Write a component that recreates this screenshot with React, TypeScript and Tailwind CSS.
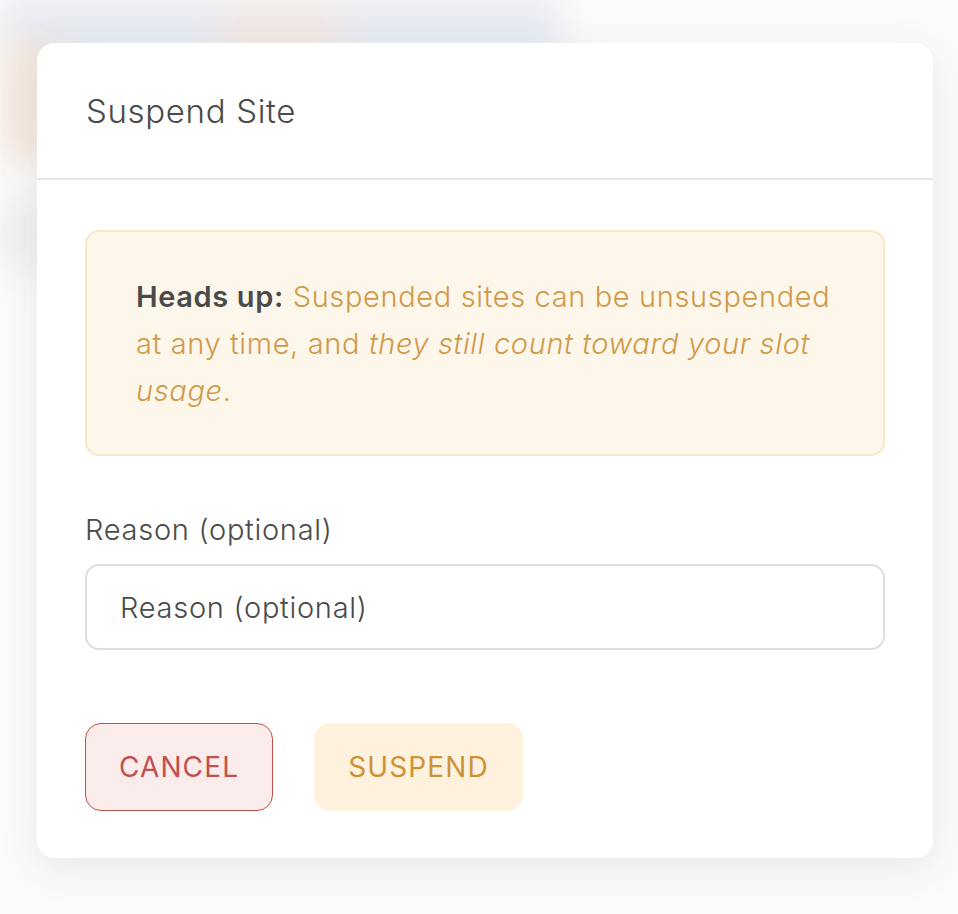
import { useState } from "react";

const SuspendDialog = () => {
  const [reason, setReason] = useState("");

  return (
    <div className="w-[896px] rounded-[18px] bg-white shadow-[0_10px_40px_rgba(60,70,90,0.10)]">
      <div className="border-b-2 border-[#e6e6e6] px-[49px] pt-[48px] pb-[47px]">
        <h2 className="text-[33px] leading-[40px] font-light tracking-[0.02em] text-[#4a4a4a]">
          Suspend Site
        </h2>
      </div>

      <div className="px-[48px] pt-[50px] pb-[47px]">
        <div className="rounded-[14px] border-2 border-[#f8e8c9] bg-[#fdf6ea] pl-[49px] pr-[28px] pt-[41px] pb-[40px]">
          <p className="text-[29px] leading-[47px] font-light tracking-[0.022em] text-[#d09a48]">
            <strong className="font-semibold text-[#4a4a4a]">Heads up:</strong>{" "}
            Suspended sites can be unsuspended at any time, and{" "}
            <em>they still count toward your slot usage</em>.
          </p>
        </div>

        <label className="mt-[54px] block text-[29px] leading-[40px] font-light tracking-[0.025em] text-[#4a4a4a]">
          Reason (optional)
        </label>
        <input
          value={reason}
          onChange={(e) => setReason(e.target.value)}
          placeholder="Reason (optional)"
          className="mt-[14px] block h-[86px] w-full rounded-[14px] border-2 border-[#dedede] px-[33px] text-[29px] font-light tracking-[0.025em] text-[#4a4a4a] outline-none placeholder:text-[#4a4a4a]"
        />

        <div className="mt-[73px] flex gap-[41px]">
          <button className="h-[88px] w-[188px] rounded-[16px] border border-[#c2504c] bg-[#fbecec] text-[28px] font-normal tracking-[0.04em] text-[#c2504c]">
            CANCEL
          </button>
          <button className="h-[88px] w-[209px] rounded-[16px] bg-[#fef2df] text-[28px] font-normal tracking-[0.04em] text-[#cd9235]">
            SUSPEND
          </button>
        </div>
      </div>
    </div>
  );
};

export default function App() {
  return (
    <div
      className="relative h-[914px] w-[958px] overflow-hidden bg-[#fbfbfb]"
      style={{ fontFamily: "Inter, 'Open Sans', sans-serif" }}
    >
      {/* blurred page behind the modal */}
      <div className="absolute inset-0 blur-[18px]">
        <div className="absolute left-0 top-0 h-[60px] w-[560px] bg-[#e5e9f1]" />
        <div className="absolute left-[220px] top-0 h-[60px] w-[120px] bg-[#f1e6e2]" />
        <div className="absolute left-0 top-[40px] h-[120px] w-[60px] bg-[#f4e6dc]" />
        <div className="absolute left-0 top-[200px] h-[70px] w-[50px] bg-[#eeeeee]" />
      </div>

      <div className="relative pl-[37px] pt-[43px]">
        <SuspendDialog />
      </div>
    </div>
  );
}
